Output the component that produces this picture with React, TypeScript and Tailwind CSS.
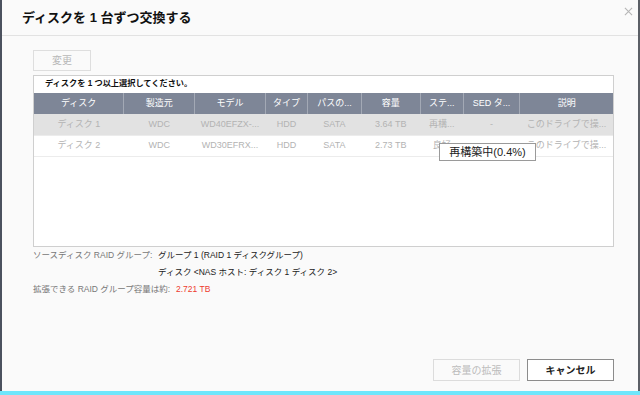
import React from 'react';

const font = { fontFamily: '"Liberation Sans", "Noto Sans CJK JP", sans-serif' };

const columns = [
  { label: 'ディスク', w: 90 },
  { label: '製造元', w: 71 },
  { label: 'モデル', w: 71 },
  { label: 'タイプ', w: 42 },
  { label: 'パスの...', w: 54 },
  { label: '容量', w: 59 },
  { label: 'ステ...', w: 43 },
  { label: 'SED タ...', w: 57 },
  { label: '説明', w: 93 },
];

const rows = [
  ['ディスク 1', 'WDC', 'WD40EFZX-...', 'HDD', 'SATA', '3.64 TB', '再構...', '-', 'このドライブで操...'],
  ['ディスク 2', 'WDC', 'WD30EFRX...', 'HDD', 'SATA', '2.73 TB', '良好', '-', 'このドライブで操...'],
];

export default function App() {
  return (
    <div className="w-[640px] h-[395px] flex flex-col overflow-hidden bg-[#fafafa]" style={font}>
      <div className="flex flex-1 min-h-0">
        <div className="w-[2px] bg-[#4b515e]" />
        <div className="flex-1 flex flex-col">
          {/* header */}
          <div className="relative h-[36px] flex items-center px-[20px] border-b border-[#e2e2e2]">
            <h1 className="text-[13px] font-bold text-[#111]">ディスクを 1 台ずつ交換する</h1>
            <svg className="absolute right-[5px] top-[7px] w-[9px] h-[9px]" viewBox="0 0 10 10">
              <path d="M1 1 L9 9 M9 1 L1 9" stroke="#b5b5b5" strokeWidth="1.2" />
            </svg>
          </div>

          <div className="flex-1 flex flex-col pl-[31px] pr-[22px] pt-[14px]">
            <button className="w-[58px] h-[21px] border border-[#dedede] bg-[#fafafa] text-[10px] text-[#b8b8b8]">
              変更
            </button>

            {/* table */}
            <div className="relative mt-[4px] w-[581px] h-[172px] border border-[#cfcfcf] bg-white">
              <div className="h-[17px] flex items-center pl-[11px] text-[8.2px] font-bold text-[#111]">
                ディスクを 1 つ以上選択してください。
              </div>
              <table className="table-fixed border-collapse text-[9px]">
                <colgroup>
                  {columns.map((c) => (
                    <col key={c.label} style={{ width: c.w }} />
                  ))}
                </colgroup>
                <thead>
                  <tr className="h-[21px] bg-[#7e8697]">
                    {columns.map((c, i) => (
                      <th
                        key={c.label}
                        className={`font-normal text-white text-center ${i < columns.length - 1 ? 'border-r border-[#a3a9b5]' : ''}`}
                      >
                        {c.label}
                      </th>
                    ))}
                  </tr>
                </thead>
                <tbody>
                  {rows.map((r, ri) => (
                    <tr
                      key={ri}
                      className={`h-[21px] border-b border-[#ececec] ${ri === 0 ? 'bg-[#e2e2e2]' : 'bg-white'}`}
                    >
                      {r.map((cell, ci) => (
                        <td key={ci} className="text-center text-[#b3b3b3] whitespace-nowrap overflow-hidden">
                          {cell}
                        </td>
                      ))}
                    </tr>
                  ))}
                </tbody>
              </table>
              {/* tooltip over the status cell */}
              <div className="absolute left-[405px] top-[67px] w-[97px] h-[18px] flex items-center justify-center bg-white border border-[#9a9a9a] text-[11px] text-[#222]">
                再構築中(0.4%)
              </div>
            </div>

            {/* info */}
            <div className="text-[8.5px] leading-[17px] whitespace-nowrap">
              <div className="flex">
                <span className="w-[125px] shrink-0 text-[#777]">ソースディスク RAID グループ:</span>
                <span className="text-[#222]">グループ 1 (RAID 1 ディスクグループ)</span>
              </div>
              <div className="flex">
                <span className="w-[125px] shrink-0" />
                <span className="text-[#222]">ディスク &lt;NAS ホスト: ディスク 1 ディスク 2&gt;</span>
              </div>
              <div className="flex">
                <span className="w-[143px] shrink-0 text-[#777]">拡張できる RAID グループ容量は約:</span>
                <span className="text-[#ee3a2f]">2.721 TB</span>
              </div>
            </div>

            {/* footer */}
            <div className="mt-auto mb-[10px] flex justify-end gap-[7px] pr-[2px]">
              <button className="w-[87px] h-[22px] border border-[#dcdcdc] bg-[#fafafa] text-[10px] text-[#bcbcbc]">
                容量の拡張
              </button>
              <button className="w-[87px] h-[22px] border border-[#8c8c8c] bg-white text-[10px] font-bold text-[#222]">
                キャンセル
              </button>
            </div>
          </div>
        </div>
        <div className="w-[2px] bg-[#5b5f66]" />
      </div>
      <div className="h-[4px] bg-[#6fe6fb]" />
    </div>
  );
}
